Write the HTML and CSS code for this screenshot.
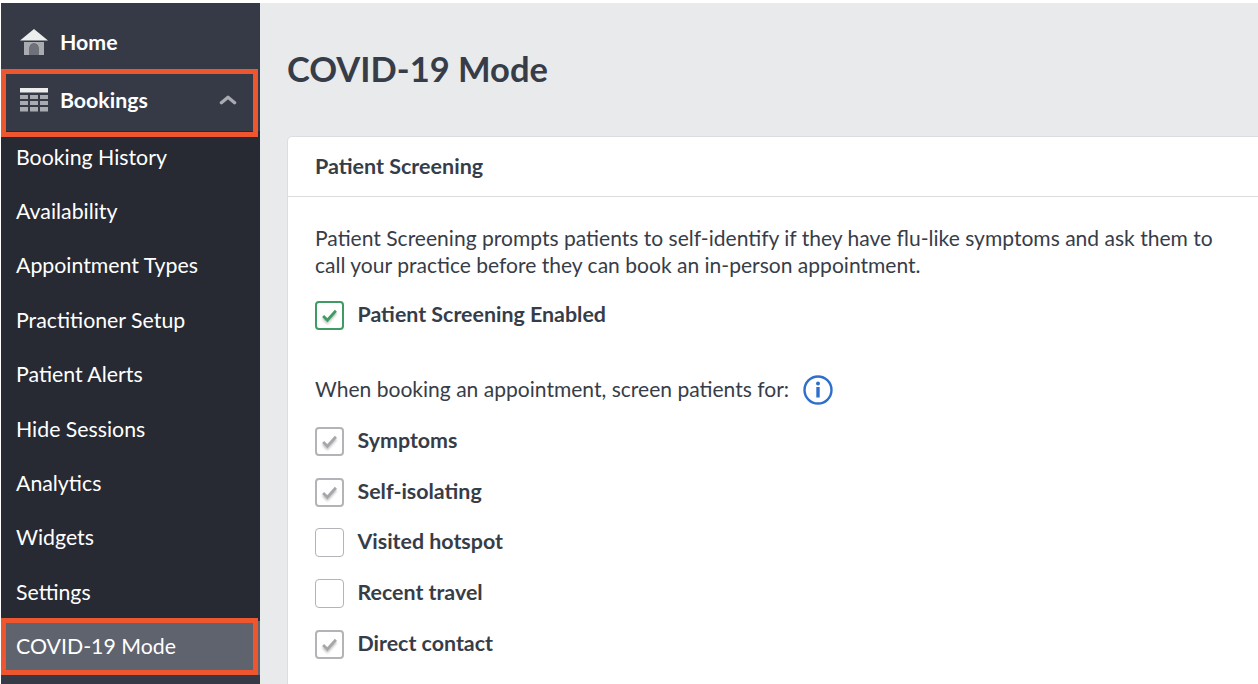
FILE: index.html
```html
<!DOCTYPE html>
<html lang="en">

<head>
  <meta charset="UTF-8">
  <title>COVID-19 Mode</title>
  <link rel="stylesheet" href="styles.css">
</head>

<body>
  <div class="app">
    <nav class="sidebar">
      <a class="nav-item">
        <svg class="nav-icon" viewBox="0 0 28 26">
          <path d="M14 0 L28 11.500 L0 11.500 Z" fill="#eceded" />
          <path d="M4 13 H24 V26 H18.500 V19 A4.500 4.500 0 0 0 9.500 19 V26 H4 Z" fill="#a9abb0" />
          <path d="M9.500 26 V19 A4.500 4.500 0 0 1 18.500 19 V26 Z" fill="#6e717a" />
        </svg>
        Home
      </a>
      <a class="nav-item marked">
        <svg class="nav-icon" viewBox="0 0 28 26">
          <rect x="0" y="1" width="28" height="4.500" fill="#eceded" />
          <path d="M0 8 H8 V12 H0 Z M10 8 H18 V12 H10 Z M20 8 H28 V12 H20 Z M0 14 H8 V18 H0 Z M10 14 H18 V18 H10 Z M20 14 H28 V18 H20 Z M0 20 H8 V24.500 H0 Z M10 20 H18 V24.500 H10 Z M20 20 H28 V24.500 H20 Z" fill="#a9abb0" />
        </svg>
        Bookings
        <svg class="nav-caret" viewBox="0 0 16 10">
          <path d="M2 8 L8 3 L14 8" fill="none" stroke="#a9abb0" stroke-width="3" stroke-linecap="round" stroke-linejoin="round" />
        </svg>
      </a>
      <div class="submenu">
        <a class="sub-item">Booking History</a>
        <a class="sub-item">Availability</a>
        <a class="sub-item">Appointment Types</a>
        <a class="sub-item">Practitioner Setup</a>
        <a class="sub-item">Patient Alerts</a>
        <a class="sub-item">Hide Sessions</a>
        <a class="sub-item">Analytics</a>
        <a class="sub-item">Widgets</a>
        <a class="sub-item">Settings</a>
        <a class="sub-item active marked">COVID-19 Mode</a>
      </div>
    </nav>

    <main class="content">
      <h1>COVID-19 Mode</h1>
      <section class="card">
        <div class="card-header">Patient Screening</div>
        <div class="card-body">
          <p class="intro">Patient Screening prompts patients to self-identify if they have flu-like symptoms and ask them to call your practice before they can book an in-person appointment.</p>
          <div class="check-row enabled">
            <span class="checkbox green">
              <svg viewBox="0 0 16 14"><path d="M2 7.500 L6 11.500 L14 2.500" fill="none" stroke="#3f9b63" stroke-width="2.600" /></svg>
            </span>
            <span class="check-label">Patient Screening Enabled</span>
          </div>
          <div class="screen-for">
            <span class="screen-text">When booking an appointment, screen patients for:</span>
            <svg class="info-icon" viewBox="0 0 30 30">
              <circle cx="15" cy="15" r="13.500" fill="none" stroke="#2f6fc9" stroke-width="2.400" />
              <circle cx="15" cy="8.500" r="2" fill="#2f6fc9" />
              <rect x="13.300" y="12" width="3.400" height="10.500" fill="#2f6fc9" />
            </svg>
          </div>
          <div class="check-list">
            <div class="check-row">
              <span class="checkbox">
                <svg viewBox="0 0 16 14"><path d="M2 7.500 L6 11.500 L14 2.500" fill="none" stroke="#a6a7ab" stroke-width="2.600" /></svg>
              </span>
              <span class="check-label">Symptoms</span>
            </div>
            <div class="check-row">
              <span class="checkbox">
                <svg viewBox="0 0 16 14"><path d="M2 7.500 L6 11.500 L14 2.500" fill="none" stroke="#a6a7ab" stroke-width="2.600" /></svg>
              </span>
              <span class="check-label">Self-isolating</span>
            </div>
            <div class="check-row">
              <span class="checkbox empty"></span>
              <span class="check-label">Visited hotspot</span>
            </div>
            <div class="check-row">
              <span class="checkbox empty"></span>
              <span class="check-label">Recent travel</span>
            </div>
            <div class="check-row">
              <span class="checkbox">
                <svg viewBox="0 0 16 14"><path d="M2 7.500 L6 11.500 L14 2.500" fill="none" stroke="#a6a7ab" stroke-width="2.600" /></svg>
              </span>
              <span class="check-label">Direct contact</span>
            </div>
          </div>
        </div>
      </section>
    </main>
  </div>
</body>

</html>
```

FILE: styles.css
```css
/* Reset styles */
* {
  margin: 0;
  padding: 0;
  box-sizing: border-box;
}

body {
  font-family: Lato, "Liberation Sans", sans-serif;
  background-color: #fff;
  color: #373d48;
  height: 684px;
  overflow: hidden;
  padding: 3px 0 0 1px;
}

.app {
  display: flex;
  height: 681px;
}

/* Sidebar styles */
.sidebar {
  width: 259px;
  flex-shrink: 0;
  background-color: #353a46;
  padding-top: 10px;
  color: #fff;
}

.nav-item {
  display: flex;
  align-items: center;
  height: 58px;
  padding-left: 19px;
  padding-bottom: 1px;
  font-size: 21.300px;
  font-weight: 700;
  position: relative;
}

.nav-icon {
  width: 28px;
  height: 26px;
  margin-right: 12px;
}

.nav-caret {
  width: 18px;
  height: 11px;
  margin-left: auto;
  margin-right: 23px;
}

.submenu {
  margin-top: 2px;
  background-color: #272a33;
}

.sub-item {
  display: flex;
  align-items: center;
  height: 54.400px;
  padding-left: 15px;
  padding-bottom: 3px;
  font-size: 21.300px;
  position: relative;
}

.sub-item.active {
  background-color: #5f636e;
}

/* Orange annotation boxes */
.marked::after {
  content: "";
  position: absolute;
  left: 0;
  right: 2px;
  top: -2px;
  bottom: -8px;
  border: 5px solid #ee5630;
}

.sub-item.marked::after {
  top: -3px;
  bottom: 0;
}

/* Main content */
.content {
  flex: 1;
  min-width: 0;
  background-color: #e9eaec;
  padding: 0 0 0 27px;
  overflow: hidden;
}

h1 {
  font-size: 34.500px;
  font-weight: 700;
  line-height: 42px;
  padding-top: 45px;
  margin-bottom: 46px;
}

.card {
  width: 991px;
  height: 600px;
  background-color: #fff;
  border: 1px solid #dcdde0;
  border-radius: 5px 0 0 0;
}

.card-header {
  height: 60px;
  display: flex;
  align-items: center;
  padding-left: 27px;
  padding-bottom: 2px;
  font-size: 21.500px;
  font-weight: 700;
  border-bottom: 1px solid #dcdde0;
}

.card-body {
  padding: 27px 48px 0 27px;
  font-size: 21.050px;
}

.intro {
  line-height: 27px;
}

.check-row {
  display: flex;
  align-items: center;
  height: 29px;
  font-size: 21.400px;
  font-weight: 700;
  gap: 13.500px;
}

.check-label,
.screen-text {
  margin-bottom: 3px;
}

.check-row.enabled {
  margin-top: 23px;
}

.checkbox {
  width: 29px;
  height: 29px;
  flex-shrink: 0;
  display: flex;
  align-items: center;
  justify-content: center;
  border: 2px solid #b3b4b8;
  border-radius: 4px;
  background-color: #fff;
}

.checkbox.green {
  border-color: #3f9b63;
}

.checkbox.empty {
  border-width: 1px;
}

.checkbox svg {
  width: 17px;
  height: 15px;
  filter: drop-shadow(0 2px 1px rgba(0, 0, 0, 0.25));
}

.screen-for {
  display: flex;
  align-items: center;
  margin-top: 45px;
  height: 30px;
}

.info-icon {
  width: 30px;
  height: 30px;
  margin-left: 14px;
}

.check-list {
  display: flex;
  flex-direction: column;
  gap: 21.700px;
  margin-top: 22px;
}
```
